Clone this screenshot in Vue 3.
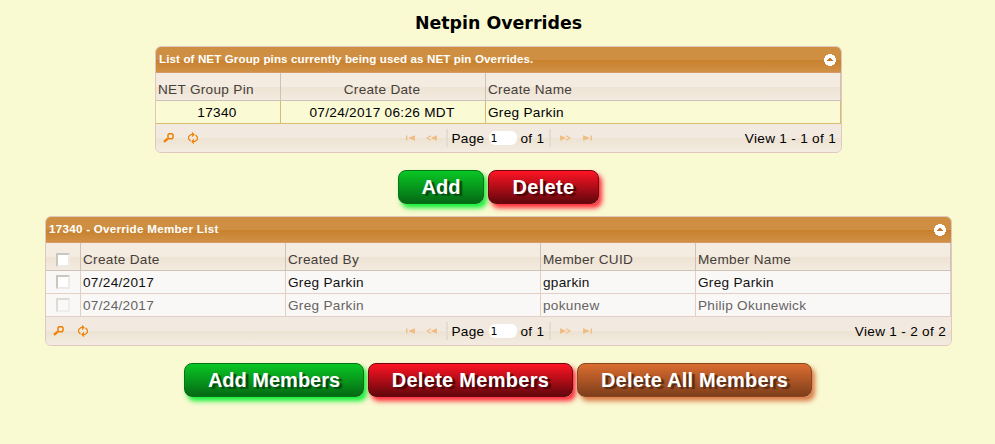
<script setup>
const grids = [
  {
    id: 'groups',
    title: 'List of NET Group pins currently being used as NET pin Overrides.',
    check: false,
    cols: [
      { label: 'NET Group Pin', width: 125, center: true, left: true },
      { label: 'Create Date', width: 205, center: true },
      { label: 'Create Name', width: 355 }
    ],
    rows: [{ cells: ['17340', '07/24/2017 06:26 MDT', 'Greg Parkin'], selected: true }],
    view: 'View 1 - 1 of 1',
    buttons: [
      { label: 'Add', kind: 'green', width: 86 },
      { label: 'Delete', kind: 'red', width: 111 }
    ]
  },
  {
    id: 'members',
    title: '17340 - Override Member List',
    check: true,
    cols: [
      { label: 'Create Date', width: 205 },
      { label: 'Created By', width: 255 },
      { label: 'Member CUID', width: 155 },
      { label: 'Member Name', width: 255 }
    ],
    rows: [
      { cells: ['07/24/2017', 'Greg Parkin', 'gparkin', 'Greg Parkin'] },
      { cells: ['07/24/2017', 'Greg Parkin', 'pokunew', 'Philip Okunewick'], disabled: true }
    ],
    view: 'View 1 - 2 of 2',
    buttons: [
      { label: 'Add Members', kind: 'green', width: 180 },
      { label: 'Delete Members', kind: 'red', width: 205 },
      { label: 'Delete All Members', kind: 'brown', width: 235 }
    ]
  }
]
</script>

<template>
  <main class="page">
    <h1>Netpin Overrides</h1>
    <template v-for="g in grids" :key="g.id">
      <section class="grid" :class="g.id">
        <header class="caption">
          <span class="title">{{ g.title }}</span>
          <svg class="toggle" width="12" height="12" viewBox="0 0 12 12">
            <path d="M4 0H8V1H10V2H11V4H12V8H11V10H10V11H8V12H4V11H2V10H1V8H0V4H1V2H2V1H4Z" fill="#fff" />
            <path d="M3 7V6H4V5H5V4H7V5H8V6H9V7Z" fill="#c77b27" />
          </svg>
        </header>
        <div class="row head">
          <div v-if="g.check" class="cell tick"><span class="box"></span></div>
          <div
            v-for="c in g.cols"
            :key="c.label"
            class="cell"
            :class="{ center: c.center && !c.left }"
            :style="{ width: c.width + 'px' }"
          >{{ c.label }}</div>
        </div>
        <div
          v-for="(r, i) in g.rows"
          :key="i"
          class="row"
          :class="{ selected: r.selected, disabled: r.disabled }"
        >
          <div v-if="g.check" class="cell tick"><span class="box"></span></div>
          <div
            v-for="(t, j) in r.cells"
            :key="j"
            class="cell"
            :class="{ center: g.cols[j].center }"
            :style="{ width: g.cols[j].width + 'px' }"
          >{{ t }}</div>
        </div>
        <footer class="pager">
          <div class="tools">
            <svg width="11" height="10" viewBox="0 0 11 10" fill="none" stroke="#f08000">
              <path d="M5 1.8L6 .8H9L10 1.8V4.8L9 5.8H6L5 4.8Z" stroke-width="1.5" />
              <path d="M4.8 5.6L1 8.8" stroke-width="2.4" />
            </svg>
            <svg width="10" height="12" viewBox="0 0 10 12" fill="none" stroke="#f08000" stroke-width="1.1">
              <path d="M2.5 9L.6 7V4.6L3 2.5H5.2M4 .5L6 2.5L4 4.5" />
              <path d="M7.5 3L9.4 5V7.4L7 9.5H4.8M6 7.5L4 9.5L6 11.5" />
            </svg>
          </div>
          <div class="nav">
            <svg class="first" width="10" height="6" viewBox="0 0 10 6" fill="#f1bd82">
              <path d="M0 .5H1.4V5.5H0ZM9 .3V5.7L3 3.4V2.6Z" />
            </svg>
            <svg class="prev" width="12" height="6" viewBox="0 0 12 6" fill="#f1bd82">
              <path d="M11 .3V5.7L5.5 3.4V2.6Z" />
              <path d="M5 .7L1 3L5 5.3" fill="none" stroke="#f1bd82" stroke-width="1.2" />
            </svg>
            <i class="sep"></i>
            <span class="pg">Page</span>
            <span class="field">1</span>
            <span class="of">of 1</span>
            <i class="sep"></i>
            <svg class="next" width="12" height="6" viewBox="0 0 12 6" fill="#f1bd82">
              <path d="M0 .3V5.7L5.5 3.4V2.6Z" />
              <path d="M6 .7L10 3L6 5.3" fill="none" stroke="#f1bd82" stroke-width="1.2" />
            </svg>
            <svg class="last" width="10" height="6" viewBox="0 0 10 6" fill="#f1bd82">
              <path d="M7.6 .5H9V5.5H7.6ZM0 .3V5.7L6 3.4V2.6Z" />
            </svg>
          </div>
          <div class="view">{{ g.view }}</div>
        </footer>
      </section>
      <div class="actions" :class="g.id">
        <button
          v-for="b in g.buttons"
          :key="b.label"
          :class="b.kind"
          :style="{ width: b.width + 'px' }"
        >{{ b.label }}</button>
      </div>
    </template>
  </main>
</template>

<style>
body { background: #f9f9d2; }
</style>

<style scoped>
* { box-sizing: border-box; }
.page {
  width: 995px;
  height: 444px;
  overflow: hidden;
  background: #f9f9d2;
  font-family: "Liberation Sans", Arial, sans-serif;
  font-size: 13.6px;
  color: #000;
  white-space: nowrap;
}
h1 {
  margin: 0;
  height: 46px;
  padding: 13px 0 0 2px;
  text-align: center;
  font: bold 17.4px/21px "DejaVu Sans", sans-serif;
}
.grid {
  border: 1px solid #dfc9be;
  border-radius: 6px;
  background: #f4ece1;
  overflow: hidden;
  letter-spacing: .3px;
}
.grid.groups { width: 687px; margin-left: 155px; }
.grid.members { width: 907px; margin-left: 45px; }
.caption {
  height: 26px;
  padding: 0 5px 2px 3px;
  display: flex;
  align-items: center;
  justify-content: space-between;
  border-bottom: 1px solid #d69a69;
  background: linear-gradient(#ce8f42 0 50%, #c8812c 52%, #d09046 100%);
  color: #fff;
  font-size: 11.6px;
  font-weight: bold;
  letter-spacing: .11px;
}
.members .caption { letter-spacing: .28px; }
.toggle { margin-top: 2px; }
.row { display: flex; height: 23px; background: #faf8f7; color: #111; }
.cell {
  border-right: 1px solid #e2cfc5;
  border-bottom: 1px solid #e2cfc5;
  padding: 0 2px;
  line-height: 23px;
  overflow: hidden;
}
.cell.center { text-align: center; padding-right: 4px; }
.head {
  height: 28px;
  color: #453e3b;
  background: linear-gradient(#f4ece1 0 48%, #eee3d3 52%, #f4ece2 100%);
}
.head .cell { line-height: 20px; padding-top: 7px; border-color: #cdc1b8; }
.selected { background: #fafad5; color: #000; }
.selected .cell { border-color: #d8bb70; }
.disabled .cell { color: #656463; }
.tick { width: 35px; display: flex; align-items: flex-start; padding: 4px 0 0 10px; }
.head .cell.tick { padding-top: 10px; }
.box {
  width: 14px;
  height: 14px;
  border: 2px solid;
  border-color: #cbc7be #eeebe6 #eeebe6 #cbc7be;
  background: #fff;
}
.disabled .box { border-color: #dedbd6 #f0eeec #f0eeec #dedbd6; background: #faf9f7; }
.pager {
  display: grid;
  grid-template-columns: 1fr 190px 1fr;
  align-items: center;
  height: 28px;
  background: linear-gradient(#f2eae0 0 50%, #ede3d3 52%, #f4ece2 100%);
}
.tools { display: flex; align-items: center; gap: 14px; padding-left: 7px; }
.nav { display: flex; align-items: center; margin-left: -2px; }
.first { margin-left: 4px; flex: none; }
.prev { margin-left: 10px; flex: none; }
.sep { width: 2px; height: 18px; background: #e2dcd4; margin-left: 8px; flex: none; }
.pg { margin-left: 4px; width: 34px; flex: none; }
.field {
  width: 28px;
  height: 14px;
  margin-left: 3px;
  padding-left: 2px;
  border-radius: 6px;
  background: #fff;
  font: 11px/15px "DejaVu Sans", sans-serif;
  letter-spacing: 0;
  flex: none;
}
.of { margin-left: 4px; width: 24px; flex: none; }
.of + .sep { margin-left: 4px; }
.next { margin-left: 9px; flex: none; }
.last { margin-left: 11px; flex: none; }
.view { text-align: right; padding-right: 5px; }
.actions { display: flex; gap: 4px; }
.actions.groups { height: 63px; padding: 17px 0 0 398px; }
.actions.members { padding: 17px 0 0 184px; }
button {
  flex: none;
  height: 34px;
  padding: 0;
  border: 1px solid;
  border-radius: 8px;
  font: bold 20px/32px "Liberation Sans", Arial, sans-serif;
  color: #fff;
}
.green {
  border-color: #087218;
  background: linear-gradient(#09c724, #056914);
  box-shadow: 3px 4px 5px #10f035;
  text-shadow: 3px 2px 1px #034d10;
}
.red {
  border-color: #6c0710;
  background: linear-gradient(#ff1424, #62060c);
  box-shadow: 3px 4px 5px #ff2937;
  text-shadow: 3px 2px 1px #4a0508;
  letter-spacing: .3px;
}
.brown {
  border-color: #8b461f;
  background: linear-gradient(#db6d30, #7e3e1b);
  box-shadow: 3px 4px 5px #d87843;
  text-shadow: 3px 2px 1px #592d14;
  letter-spacing: .18px;
}
</style>
